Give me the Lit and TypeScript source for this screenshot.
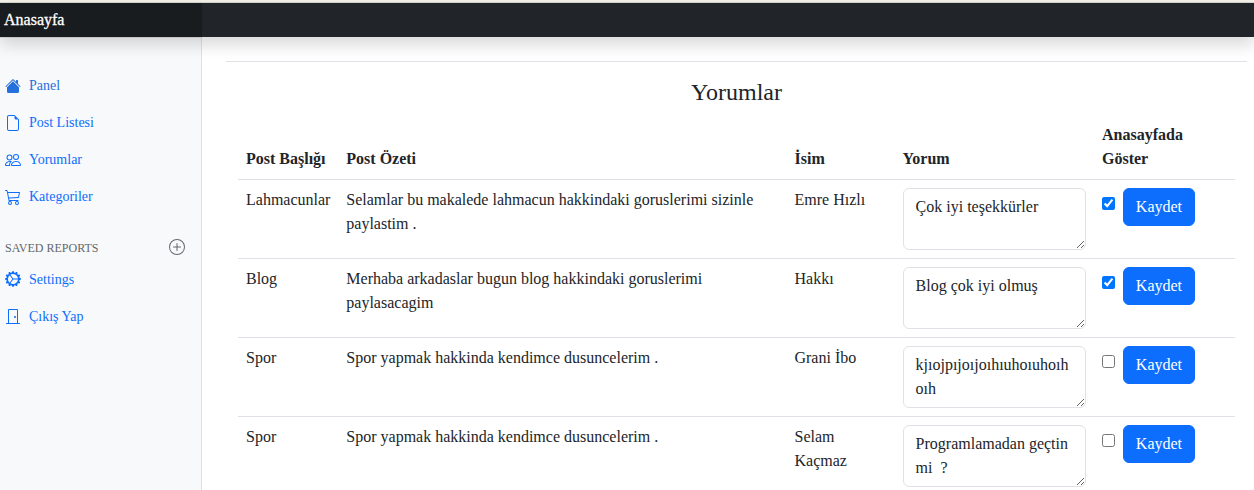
import { LitElement, html, css, svg } from "lit";
import { customElement, property } from "lit/decorators.js";

const ICONS: Record<string, string[]> = {
  house: [
    "M8.707 1.5a1 1 0 0 0-1.414 0L.646 8.146a.5.5 0 0 0 .708.708L8 2.207l6.646 6.647a.5.5 0 0 0 .708-.708L13 5.793V2.5a.5.5 0 0 0-.5-.5h-1a.5.5 0 0 0-.5.5v1.293L8.707 1.5Z",
    "m8 3.293 6 6V13.5a1.5 1.5 0 0 1-1.5 1.5h-9A1.5 1.5 0 0 1 2 13.5V9.293l6-6Z",
  ],
  file: [
    "M14 4.5V14a2 2 0 0 1-2 2H4a2 2 0 0 1-2-2V2a2 2 0 0 1 2-2h5.5L14 4.5zm-3 0A1.5 1.5 0 0 1 9.5 3V1H4a1 1 0 0 0-1 1v12a1 1 0 0 0 1 1h8a1 1 0 0 0 1-1V4.5h-2z",
  ],
  people: [
    "M15 14s1 0 1-1-1-4-5-4-5 3-5 4 1 1 1 1h8Zm-7.978-1A.261.261 0 0 1 7 12.996c.001-.264.167-1.03.76-1.72C8.312 10.629 9.282 10 11 10c1.717 0 2.687.63 3.24 1.276.593.69.758 1.457.76 1.72l-.008.002a.274.274 0 0 1-.014.002H7.022ZM11 7a2 2 0 1 0 0-4 2 2 0 0 0 0 4Zm3-2a3 3 0 1 1-6 0 3 3 0 0 1 6 0ZM6.936 9.28a5.88 5.88 0 0 0-1.23-.247A7.35 7.35 0 0 0 5 9c-4 0-5 3-5 4 0 .667.333 1 1 1h4.216A2.238 2.238 0 0 1 5 13c0-1.01.377-2.042 1.09-2.904.243-.294.526-.569.846-.816ZM4.92 10A5.493 5.493 0 0 0 4 13H1c0-.26.164-1.03.76-1.724.545-.636 1.492-1.256 3.16-1.275ZM1.5 5.5a3 3 0 1 1 6 0 3 3 0 0 1-6 0Zm3-2a2 2 0 1 0 0 4 2 2 0 0 0 0-4Z",
  ],
  cart: [
    "M0 1.5A.5.5 0 0 1 .5 1H2a.5.5 0 0 1 .485.379L2.89 3H14.5a.5.5 0 0 1 .49.598l-1 5a.5.5 0 0 1-.465.401l-9.397.472L4.415 11H13a.5.5 0 0 1 0 1H4a.5.5 0 0 1-.491-.408L2.01 3.607 1.61 2H.5a.5.5 0 0 1-.5-.5zM3.102 4l.84 4.479 9.144-.459L13.89 4H3.102zM5 12a2 2 0 1 0 0 4 2 2 0 0 0 0-4zm7 0a2 2 0 1 0 0 4 2 2 0 0 0 0-4zm-7 1a1 1 0 1 1 0 2 1 1 0 0 1 0-2zm7 0a1 1 0 1 1 0 2 1 1 0 0 1 0-2z",
  ],
  plus: [
    "M8 15A7 7 0 1 1 8 1a7 7 0 0 1 0 14zm0 1A8 8 0 1 0 8 0a8 8 0 0 0 0 16z",
    "M8 4a.5.5 0 0 1 .5.5v3h3a.5.5 0 0 1 0 1h-3v3a.5.5 0 0 1-1 0v-3h-3a.5.5 0 0 1 0-1h3v-3A.5.5 0 0 1 8 4z",
  ],
  gear: [
    "M7.068.727c.243-.97 1.62-.97 1.864 0l.071.286a.96.96 0 0 0 1.622.434l.205-.211c.695-.719 1.888-.03 1.613.931l-.08.284a.96.96 0 0 0 1.187 1.187l.283-.081c.96-.275 1.65.918.931 1.613l-.211.205a.96.96 0 0 0 .434 1.622l.286.071c.97.243.97 1.62 0 1.864l-.286.071a.96.96 0 0 0-.434 1.622l.211.205c.719.695.03 1.888-.931 1.613l-.284-.08a.96.96 0 0 0-1.187 1.187l.081.283c.275.96-.918 1.65-1.613.931l-.205-.211a.96.96 0 0 0-1.622.434l-.071.286c-.243.97-1.62.97-1.864 0l-.071-.286a.96.96 0 0 0-1.622-.434l-.205.211c-.695.719-1.888.03-1.613-.931l.08-.284a.96.96 0 0 0-1.186-1.187l-.284.081c-.96.275-1.65-.918-.931-1.613l.211-.205a.96.96 0 0 0-.434-1.622l-.286-.071c-.97-.243-.97-1.62 0-1.864l.286-.071a.96.96 0 0 0 .434-1.622l-.211-.205c-.719-.695-.03-1.888.931-1.613l.284.08a.96.96 0 0 0 1.187-1.186l-.081-.284c-.275-.96.918-1.65 1.613-.931l.205.211a.96.96 0 0 0 1.622-.434l.071-.286zM12.973 8.5H8.25l-2.834 3.779A4.998 4.998 0 0 0 12.973 8.5zm0-1a4.998 4.998 0 0 0-7.557-3.779l2.834 3.78h4.723zM5.048 3.967c-.03.021-.058.043-.087.065l.087-.065zm-.431.355A4.984 4.984 0 0 0 3.002 8c0 1.455.622 2.765 1.615 3.678L7.375 8 4.617 4.322zm.344 7.646.087.065-.087-.065z",
  ],
  door: [
    "M3 2a1 1 0 0 1 1-1h8a1 1 0 0 1 1 1v13h1.5a.5.5 0 0 1 0 1h-13a.5.5 0 0 1 0-1H3V2zm1 13h8V2H4v13z",
    "M9 9a1 1 0 1 0 2 0 1 1 0 0 0-2 0z",
  ],
};

@customElement("bi-icon")
class BiIcon extends LitElement {
  @property() name = "";
  static styles = css`
    :host { display: block; width: 16px; height: 16px; flex: none; }
    svg { display: block; fill: currentColor; }
  `;
  render() {
    return html`<svg width="16" height="16" viewBox="0 0 16 16" aria-hidden="true">
      ${(ICONS[this.name] ?? []).map((d) => svg`<path d=${d}></path>`)}
    </svg>`;
  }
}

@customElement("side-nav")
class SideNav extends LitElement {
  static styles = css`
    :host {
      display: block; box-sizing: border-box; width: 202px; flex: none;
      background: #f8f9fa; border-right: 1px solid #dee2e6; padding-top: 30px;
      box-shadow: inset 0 1px 0 rgba(0, 0, 0, 0.1);
    }
    .link {
      display: flex; align-items: flex-start; gap: 8px; padding: 8px 5px;
      font-size: 14px; line-height: 21px; color: #0d6efd; text-decoration: none;
    }
    .link.active { color: #2470dc; }
    .primary bi-icon { margin-top: 3px; }
    .secondary bi-icon { margin-top: 2px; }
    .heading {
      display: flex; align-items: center; justify-content: space-between;
      margin: 24px 16px 6px 5px; height: 16px;
      font-size: 12px; line-height: 16px; color: #63686d; text-transform: uppercase;
    }
    .label { padding-top: 2px; }
  `;
  link(icon: string, label: string, active = false) {
    return html`<a class="link ${active ? "active" : ""}"><bi-icon name=${icon}></bi-icon>${label}</a>`;
  }
  render() {
    return html`
      <nav class="primary">
        ${this.link("house", "Panel", true)} ${this.link("file", "Post Listesi")}
        ${this.link("people", "Yorumlar")} ${this.link("cart", "Kategoriler")}
      </nav>
      <div class="heading"><span class="label">Saved reports</span><bi-icon name="plus"></bi-icon></div>
      <nav class="secondary">${this.link("gear", "Settings")} ${this.link("door", "Çıkış Yap")}</nav>
    `;
  }
}

interface Comment {
  title: string;
  summary: string;
  name: string;
  text: string;
  shown: boolean;
}

const COMMENTS: Comment[] = [
  { title: "Lahmacunlar", summary: "Selamlar bu makalede lahmacun hakkindaki goruslerimi sizinle paylastim .", name: "Emre Hızlı", text: "Çok iyi teşekkürler", shown: true },
  { title: "Blog", summary: "Merhaba arkadaslar bugun blog hakkindaki goruslerimi paylasacagim", name: "Hakkı", text: "Blog çok iyi olmuş", shown: true },
  { title: "Spor", summary: "Spor yapmak hakkinda kendimce dusuncelerim .", name: "Grani İbo", text: "kjıojpıjoıjoıhıuhoıuhoıh oıh", shown: false },
  { title: "Spor", summary: "Spor yapmak hakkinda kendimce dusuncelerim .", name: "Selam Kaçmaz", text: "Programlamadan geçtin mi  ?", shown: false },
];

@customElement("comment-table")
class CommentTable extends LitElement {
  static styles = css`
    :host { display: block; }
    .table { width: 997px; table-layout: fixed; border-collapse: collapse; }
    .c1 { width: 100.3px; }
    .c2 { width: 448.2px; }
    .c3 { width: 108.1px; }
    .c4 { width: 199.4px; }
    .head, .cell {
      padding: 8px; border-bottom: 1px solid #dee2e6; text-align: left; vertical-align: top;
    }
    .head { vertical-align: bottom; font-weight: 700; }
    .text {
      display: block; box-sizing: border-box; width: 183px; height: 62px; margin: 0;
      padding: 6px 12px; border: 1px solid #dee2e6; border-radius: 6px;
      background: #fff; color: #212529; font: inherit; letter-spacing: inherit; outline: 0;
      resize: vertical; overflow: auto;
    }
    .actions { display: flex; align-items: flex-start; gap: 8px; }
    .check { width: 13px; height: 13px; margin: 9px 0 0; }
    .save {
      box-sizing: border-box; width: 72px; height: 38px; padding: 6px 0; border: 1px solid #0d6efd;
      border-radius: 6px; background: #0d6efd; color: #fff; font: inherit; letter-spacing: inherit;
    }
  `;
  render() {
    return html`<table class="table">
      <colgroup><col class="c1" /><col class="c2" /><col class="c3" /><col class="c4" /><col /></colgroup>
      <thead>
        <tr>
          <th class="head">Post Başlığı</th>
          <th class="head">Post Özeti</th>
          <th class="head">İsim</th>
          <th class="head">Yorum</th>
          <th class="head">Anasayfada<br />Göster</th>
        </tr>
      </thead>
      <tbody>
        ${COMMENTS.map(
          (c) => html`<tr>
            <td class="cell">${c.title}</td>
            <td class="cell">${c.summary}</td>
            <td class="cell">${c.name}</td>
            <td class="cell"><textarea class="text" rows="2" spellcheck="false" .value=${c.text}></textarea></td>
            <td class="cell">
              <div class="actions">
                <input class="check" type="checkbox" .checked=${c.shown} />
                <button class="save">Kaydet</button>
              </div>
            </td>
          </tr>`,
        )}
      </tbody>
    </table>`;
  }
}

@customElement("app-root")
class AppRoot extends LitElement {
  static styles = css`
    :host {
      display: flex; flex-direction: column; height: 490px; overflow: hidden; background: #fff;
      font-family: "Liberation Serif", "Times New Roman", serif; font-size: 16px; line-height: 24px;
      color: #212529;
    }
    .strip { height: 3px; flex: none; box-sizing: border-box; background: #f3f1e7; border-bottom: 1px solid #d5d5d0; }
    .bar {
      height: 34px; flex: none; background: #212529; display: flex; position: relative; z-index: 1;
      box-shadow: 0 8px 16px rgba(0, 0, 0, 0.15);
    }
    .brand {
      box-sizing: border-box; width: 202px; padding: 5px 4px; background: #191c1f;
      color: #fff; font-size: 16px; -webkit-text-stroke: 0.3px #fff;
    }
    .body { display: flex; flex: 1; min-height: 0; }
    .main { flex: 1; padding: 24px 7px 0 24px; }
    .rule { height: 1px; background: #dee2e6; margin-bottom: 16px; }
    .title { margin: 0 0 8px; font-size: 24px; line-height: 29px; font-weight: 400; text-align: center; }
    .wrap { padding: 0 12px; }
  `;
  render() {
    return html`
      <div class="strip"></div>
      <header class="bar"><div class="brand">Anasayfa</div></header>
      <div class="body">
        <side-nav></side-nav>
        <main class="main">
          <div class="rule"></div>
          <h4 class="title">Yorumlar</h4>
          <div class="wrap"><comment-table></comment-table></div>
        </main>
      </div>
    `;
  }
}
